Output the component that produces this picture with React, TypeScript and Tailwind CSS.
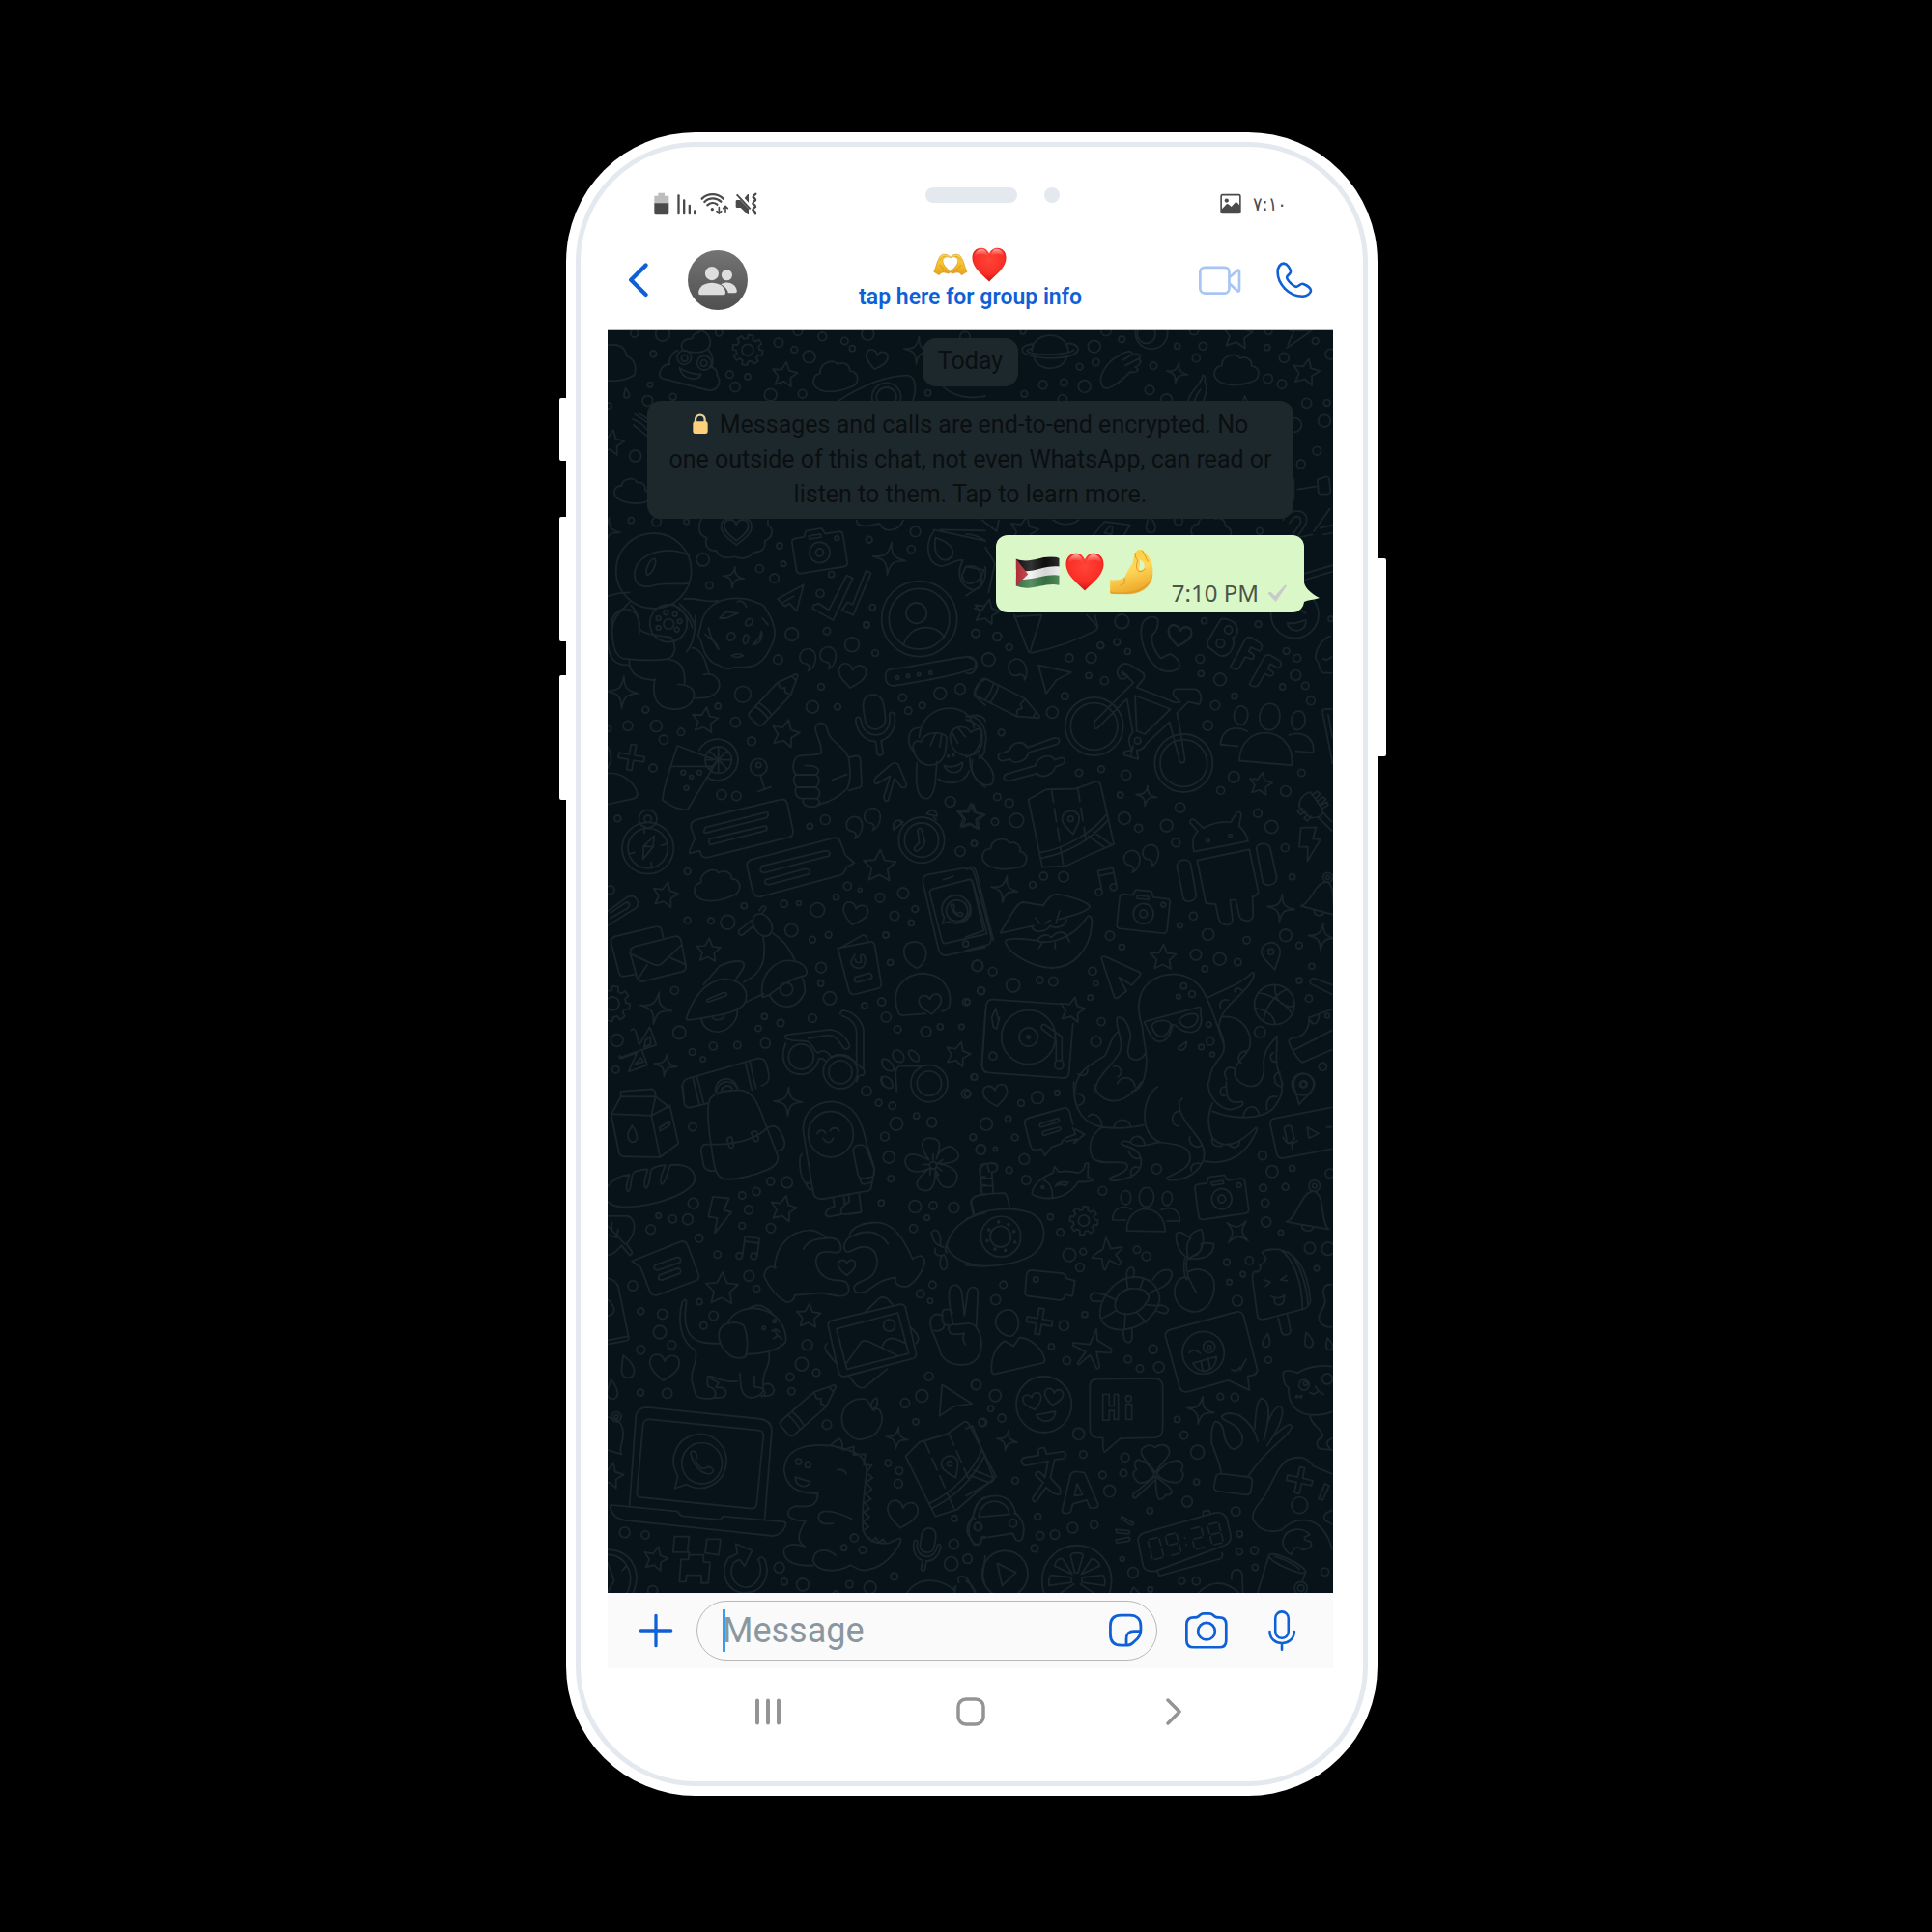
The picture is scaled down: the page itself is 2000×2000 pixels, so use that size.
import React from "react";

/* ---------- wallpaper doodles ---------- */

const ring = (r: number, x = 0, y = 0) =>
  `M${x - r} ${y}a${r} ${r} 0 1 0 ${2 * r} 0a${r} ${r} 0 1 0 ${-2 * r} 0Z`;

const gearPath = (() => {
  const pts: string[] = [];
  for (let i = 0; i < 8; i++) {
    const a = (i * Math.PI) / 4;
    for (const [d, r] of [[-0.24, 38], [-0.17, 50], [0.17, 50], [0.24, 38]]) {
      pts.push(`${(Math.cos(a + d) * r).toFixed(1)} ${(Math.sin(a + d) * r).toFixed(1)}`);
    }
  }
  return `M${pts.join("L")}Z${ring(19)}`;
})();

const SHAPES = {
  star: "M0 -50L15 -18L49 -15L24 9L31 42L0 26L-31 42L-24 9L-49 -15L-15 -18Z",
  sparkle: "M0 -50C4 -13 13 -4 50 0C13 4 4 13 0 50C-4 13 -13 4 -50 0C-13 -4 -4 -13 0 -50Z",
  heart: "M0 45C-20 30 -50 10 -48 -15C-46 -45 -10 -45 0 -18C10 -45 46 -45 48 -15C50 10 20 30 0 45Z",
  cloud: "M-52 30C-80 10 -65 -20 -42 -20C-40 -52 8 -60 16 -38C38 -45 54 -28 50 -12C82 -2 72 34 45 38C10 46 -28 44 -52 30Z",
  quote: "M0 16C-34 18 -34 -32 2 -34C38 -30 32 24 6 38C12 28 10 20 0 16Z",
  camera: `M-68 -45H-40L-32 -63H18L26 -45H68Q80 -45 80 -33V52Q80 65 68 65H-68Q-80 65 -80 52V-33Q-80 -45 -68 -45Z${ring(32, 0, 10)}${ring(12, 0, 10)}${ring(7, 60, -25)}M-25 -46H12V-36H-25Z`,
  gear: gearPath,
  drop: "M-8 -40C10 -20 26 0 20 20C12 42 -18 38 -20 14C-20 -4 -12 -20 -8 -40Z",
  pin: `M0 48C-14 20 -32 4 -32 -16C-32 -58 32 -58 32 -16C32 4 14 20 0 48Z${ring(10, 0, -16)}`,
  people: "M0 -100C42 -100 42 -20 0 -18C-42 -20 -42 -100 0 -100ZM-82 85C-88 -40 82 -40 82 85ZM-90 -85C-60 -85 -62 -28 -88 -26C-120 -30 -116 -85 -90 -85ZM90 -85C60 -85 62 -28 88 -26C120 -30 116 -85 90 -85ZM-90 40H-145C-145 -10 -105 -25 -65 -8M90 40H145C145 -10 105 -25 65 -8",
  plus: "M-8 -40H8V-8H40V8H8V40H-8V8H-40V-8H-8Z",
  bolt: "M-20 -55L30 -50L14 -14L38 -8L-14 56L-6 10L-34 6Z",
  note: `M-12 30V-38H38V22M-12 -22H38${ring(11, -23, 30)}${ring(11, 27, 24)}`,
  mic: "M0 -90C38 -90 34 -50 32 -10C30 30 -30 30 -32 -10C-34 -50 -38 -90 0 -90ZM-62 -15Q-62 -26 -54 -26Q-46 -26 -46 -15C-46 56 46 56 46 -15Q46 -26 54 -26Q62 -26 62 -15C62 30 35 55 9 58V95Q9 104 0 104Q-9 104 -9 95V58C-35 55 -62 30 -62 -15Z",
  pencil: "M-85 -28H40L98 -4Q102 0 98 4L40 28H-85Q-98 28 -98 14V-14Q-98 -28 -85 -28ZM-62 -28Q-56 0 -62 28M-46 -28Q-40 0 -46 28M40 -28L34 -8L44 0L34 10L40 28M84 -9V9",
  bell: `M-58 45C-30 30 -34 -40 0 -48C36 -42 30 30 58 45Z${ring(15, 0, -62)}${ring(6, 0, -62)}M-16 46C-12 64 14 64 16 46`,
  map: `M-118 -90L-60 -112L30 -100L95 -112Q104 -112 106 -100L118 85L40 105L-36 128L-108 120Z${"M-44 -108V-70M-44 -50V-10M-44 10V50M-44 70V120M36 -98V-60M36 -40V0M36 20V60"}M-110 75C-30 75 60 40 112 -10M-108 92C-20 90 50 60 114 8M45 48L90 92M62 38L108 84M0 36C-14 14 -26 4 -26 -12C-26 -44 26 -44 26 -12C26 4 14 14 0 36Z${ring(8, 0, -12)}`,
  plane: "M-50 -42L52 -20L6 4L-26 46Z",
  logo: `M-48 66L-86 78L-76 40A84 84 0 1 1 -48 66Z${ring(64)}M-34 -24C-42 -36 -24 -46 -18 -30C-12 -18 -24 -14 -18 -4C-8 16 4 20 14 14C20 6 42 18 34 28C16 44 -24 18 -34 -24Z`,
} as const;

type Mark = [keyof typeof SHAPES, number, number, number, number?];

interface Tile {
  x: number;
  y: number;
  scaleY?: number;
  dots: number[][];
  marks: Mark[];
  lines: string[];
}

const TILES: Tile[] = [
  {
    x: 620, y: 330,
    dots: [[110, 45, 12], [198, 47, 22], [373, 43, 11], [618, 38, 14], [835, 48, 19], [694, 55, 13], [763, 69, 11], [787, 92, 9], [558, 74, 14], [607, 96, 10], [653, 118, 19], [169, 109, 10], [406, 173, 11], [462, 180, 9], [423, 212, 15], [533, 236, 19], [632, 233, 13], [159, 205, 8], [230, 242, 10], [151, 255, 16], [1022, 230, 9], [1137, 56, 16], [113, 426, 18], [100, 626, 9], [179, 630, 14], [272, 630, 8], [561, 705, 9], [323, 748, 20], [499, 776, 12], [545, 806, 14], [573, 761, 8], [343, 828, 11], [722, 794, 9], [687, 853, 12], [839, 686, 10], [983, 661, 16], [970, 716, 12], [850, 896, 9], [831, 950, 9], [30, 270, 9]],
    marks: [["gear", 462, 97, 0.95, 12], ["star", 577, 174, 0.8, 8], ["cloud", 732, 182, 1, -10], ["heart", 862, 126, 0.7, 12], ["sparkle", 990, 98, 0.85, 6], ["drop", 86, 232, 0.4], ["star", 38, 385, 0.8, 10], ["cloud", 102, 538, 0.8, 5], ["heart", 427, 658, 0.98], ["heart", 427, 654, 0.78], ["camera", 684, 716, 1, -9], ["sparkle", 902, 745, 1.02, 8], ["sparkle", 418, 803, 0.66, 8], ["sparkle", 26, 658, 0.8, 8]],
    lines: [
      "M27 82C60 75 85 90 85 115C112 125 118 150 110 175C85 192 50 195 27 192",
      "M262 98C245 75 270 60 290 62C288 45 310 45 318 36C345 45 352 75 340 92C320 110 285 105 262 98",
      "M245 98C225 105 215 130 220 142C195 140 180 172 195 185L340 222C370 225 382 195 367 175C368 160 358 150 350 152C358 130 352 112 340 96",
      "M250 152C265 165 300 175 318 172C310 195 260 192 250 152Z" + ring(22, 265, 120) + ring(10, 266, 122) + ring(22, 327, 137) + ring(10, 326, 138),
      "M745 254C820 205 900 175 960 176C988 182 985 225 975 255" + ring(45, 893, 244) + ring(31, 893, 244),
      "M105 312Q130 320 150 345M112 296L150 322M125 294L150 310M108 330L150 365",
      "M318 622C305 650 312 675 335 680C325 710 345 722 365 720C372 745 405 745 420 738C445 750 470 742 480 725C505 728 520 710 515 690C540 680 545 655 525 640L525 625",
      "M800 626C802 655 850 640 872 636C890 672 935 655 945 626M1070 212C1110 245 1150 250 1200 240",
      ring(117, 170, 783) + "M280 735C230 705 130 720 112 780C105 830 135 835 165 830C205 815 250 830 282 820M150 795C140 780 160 745 172 745C185 750 165 795 150 795Z",
      "M1040 660C1010 700 1020 760 1060 768C1090 770 1100 745 1130 750C1110 790 1120 830 1160 842C1190 840 1205 810 1200 770M1040 655L1200 690M1060 655L1200 658M1045 680C1080 690 1105 710 1098 735C1080 765 1035 750 1045 680ZM1140 770L1195 780C1190 825 1130 840 1128 795Z",
      "M555 870L636 826L614 908L592 884L578 893ZM573 880L605 862",
      "M666 890L682 884L714 905L770 797L788 806L728 936L664 900ZM755 905L772 880L788 888L830 782L845 790L790 920Z",
      ring(117, 995, 932) + ring(94, 995, 932) + ring(32, 986, 914) + "M946 1014C965 945 1050 945 1072 990",
      "M27 862C60 850 80 850 95 850M95 880C60 915 45 930 42 960M265 870C300 865 340 885 370 875M250 885C280 910 295 940 300 960M230 885C255 905 285 930 290 960M100 890C120 910 130 935 125 980",
      ring(58, 216, 946) + ring(16, 217, 948) + ring(7, 208, 913) + ring(7, 185, 930) + ring(7, 236, 917) + ring(7, 251, 940) + ring(7, 185, 960) + ring(7, 242, 965),
      "M545 962C540 940 535 925 520 905C510 885 500 885 485 880C470 870 455 868 425 868C405 868 390 870 370 880C345 890 335 905 322 930L308 985C320 1000 320 1020 330 1040C345 1065 355 1070 370 1075C390 1090 410 1090 420 1082C450 1085 465 1080 480 1078C500 1070 520 1050 528 1030C545 1000 548 985 545 962Z",
      "M375 930L395 910L432 914L395 930ZM430 880C440 870 455 885 458 895M455 950C455 930 475 925 478 940C478 955 458 955 455 950ZM508 930L525 950",
      "M1166 900L1190 905L1200 890",
    ],
  },
  {
    x: 1000, y: 330,
    dots: [[435, 38, 15], [484, 64, 10], [177, 40, 8], [398, 86, 19], [353, 149, 10], [403, 135, 11], [239, 205, 13], [304, 198, 11], [368, 210, 19], [181, 233, 10], [582, 146, 11], [570, 221, 14], [656, 85, 9], [736, 85, 12], [715, 122, 12], [708, 36, 14], [935, 89, 9], [988, 121, 15], [938, 186, 14], [981, 203, 14], [1085, 69, 10], [1132, 110, 16], [1058, 262, 15], [1121, 261, 10], [1113, 317, 19], [1020, 330, 22], [1090, 410, 13], [1040, 451, 13], [940, 38, 11], [912, 659, 10], [660, 628, 13], [484, 940, 22], [740, 938, 9], [908, 949, 10], [30, 977, 12], [97, 987, 13], [1133, 932, 8], [418, 1015, 10], [300, 250, 14], [623, 252, 18]],
    marks: [["star", 843, 48, 0.95, 8], ["sparkle", 656, 168, 0.66, 10], ["cloud", 838, 162, 1, -5], ["star", 1056, 166, 0.85, 12], ["star", 180, 658, 0.9, 12], ["drop", 574, 640, 0.7], ["cloud", 760, 655, 0.9], ["star", 64, 910, 0.8, 14], ["heart", 663, 982, 0.75, 8]],
    lines: [
      "M205 100C205 40 310 30 318 100M205 78C165 85 160 108 215 118C270 128 340 120 348 98C350 82 330 75 312 77M205 92C180 98 185 105 225 110C290 112 325 108 335 96M212 122C225 165 300 165 312 120",
      ring(50, 576, 44) + ring(28, 560, 48),
      "M420 200C412 175 440 130 475 115C495 100 520 95 515 112C540 105 548 115 535 125C550 130 540 145 525 150C540 155 535 170 510 165C480 195 430 240 420 200ZM485 130L515 112M495 145L535 125",
      "M690 255C700 215 730 210 735 175Q745 175 742 195C755 220 740 245 738 255M710 255C715 235 722 228 728 220M860 255L866 240L872 255",
      "M997 90L1075 36H1005M1020 36L1000 80M1018 500V560M1030 530L1090 520M1092 500L1118 490Q1128 490 1128 500L1132 535Q1130 545 1120 545H1105Q1095 545 1094 535Z",
      "M985 625C990 600 1050 580 1058 620C1062 645 1030 665 1030 680L1075 670M1005 635C1020 605 1045 610 1038 635C1030 655 1005 670 1005 700M1080 660L1130 590M1100 650L1140 640M1110 670L1140 665",
      "M380 690L430 630L510 640L480 690M430 665C450 635 460 640 452 670ZM50 625L95 660L102 625M270 625C300 645 330 640 350 625",
      "M0 770C40 760 55 790 45 830L0 860M0 670C25 665 60 690 60 690M60 710L90 760L70 850",
      "M150 920L192 1030Q195 1040 210 1036C290 1020 360 990 400 970Q410 965 408 950L400 920M150 925L235 920L200 1030M375 920L408 955",
      "M1050 792L1140 765M1050 812L1140 785" + ring(74, 1021, 918) + "M998 945C1020 950 1040 940 1055 935C1062 975 1005 980 998 945ZM975 905L990 890L1000 905M1040 905L1055 915",
    ],
  },
  {
    x: 620, y: 630,
    dots: [[599, 80, 20], [708, 70, 11], [831, 51, 9], [786, 112, 22], [858, 138, 10], [556, 158, 14], [447, 266, 25], [690, 243, 10], [663, 305, 19], [741, 305, 10], [370, 303, 9], [145, 314, 10], [90, 364, 15], [178, 365, 18], [255, 383, 11], [201, 407, 14], [424, 353, 15], [474, 412, 13], [168, 495, 12], [943, 277, 12], [961, 317, 11], [1004, 301, 10], [1060, 264, 19], [1122, 250, 16], [381, 578, 15], [427, 582, 14], [58, 652, 10], [655, 676, 9], [703, 656, 15], [1091, 600, 16], [1165, 729, 9], [1122, 754, 15], [275, 816, 10], [451, 923, 9], [575, 917, 11], [621, 915, 7], [679, 936, 22], [737, 896, 9], [772, 862, 12], [811, 874, 6], [873, 898, 14], [945, 884, 17], [982, 933, 10], [918, 954, 14], [970, 976, 9], [891, 1014, 9], [275, 968, 10], [348, 970, 10], [400, 974, 22], [598, 999, 20], [713, 1013, 10], [663, 1028, 10], [690, 1115, 16], [905, 1099, 9], [689, 1164, 9], [235, 1186, 12], [717, 1210, 20], [825, 1233, 9], [878, 1221, 12], [892, 1269, 15], [928, 1307, 11], [1016, 1314, 16], [1060, 1299, 9], [1126, 1299, 8], [1141, 1222, 11], [1175, 1109, 17], [514, 1267, 9], [564, 1287, 11], [663, 1272, 13], [495, 1304, 9], [517, 1350, 15], [430, 1356, 11], [355, 1359, 12], [250, 1317, 20], [290, 1377, 10], [323, 1400, 8], [56, 1341, 19], [52, 1432, 11], [1170, 77, 12], [35, 874, 13], [1187, 1187, 11], [1165, 1455, 10], [30, 373, 8]],
    marks: [["quote", 647, 157, 0.95, 5], ["quote", 710, 151, 0.95, 5], ["heart", 786, 207, 0.88, 8], ["pencil", 548, 278, 1, -47], ["sparkle", 74, 260, 1, 4], ["star", 329, 347, 0.82, 8], ["star", 579, 388, 0.88, 14], ["mic", 860, 355, 0.98, -8], ["plus", 101, 462, 1, 10], ["quote", 792, 678, 0.95, 5], ["quote", 848, 652, 0.95, 5], ["star", 872, 800, 1.03, 2], ["star", 1152, 646, 0.82, 6], ["cloud", 364, 862, 1.03, -12], ["star", 206, 889, 0.8, 12], ["heart", 795, 947, 0.8, 14], ["star", 340, 1062, 0.76, 4], ["sparkle", 178, 1241, 1, 10], ["gear", 42, 1227, 1.1, 10], ["sparkle", 207, 1418, 0.7, 8], ["star", 1115, 1384, 0.78, 16], ["heart", 1030, 1227, 0.72, -8], ["logo", 1112, 938, 0.52]],
    lines: [
      "M42 30C60 -10 120 -10 126 50C110 80 200 85 225 90C245 120 235 160 200 158C170 162 110 160 75 155C45 145 38 90 42 30ZM27 100C30 160 55 178 92 175",
      "M94 158C92 200 120 220 170 222M218 158C260 165 268 190 266 236M174 218C165 260 170 310 230 312C290 315 305 270 290 250C280 238 260 236 246 235M290 122C325 125 335 180 342 205M325 205C370 195 390 240 360 265C340 280 320 278 298 278M300 20C300 90 285 120 272 134",
      "M398 90C400 70 425 70 422 88C418 102 400 104 398 90ZM448 98C450 75 466 80 465 92C460 115 448 115 448 98ZM412 146C425 140 440 140 448 146C440 153 420 153 412 146ZM505 70C510 95 498 110 478 112L500 88ZM330 80L365 110L372 126M340 60L348 88L370 125",
      "M890 210C890 195 895 190 910 188C990 178 1060 160 1140 150C1170 145 1180 180 1160 188C1080 215 990 228 915 240C895 240 890 225 890 210Z" + ring(5, 927, 214) + ring(5, 960, 209) + ring(5, 994, 204) + ring(5, 1030, 199),
      "M244 426L368 472L275 625Q235 625 198 595Q198 560 244 426ZM225 490H355M311 440A64 64 0 1 1 334 524" + ring(41, 371, 470) + "M371 430V510M331 470H411M343 441L399 499M399 441L343 499" + ring(7, 262, 509) + ring(7, 312, 509) + ring(6, 287, 523) + ring(7, 272, 557),
      ring(26, 496, 492) + ring(8, 496, 486) + "M502 520L515 562M494 568L535 554",
      "M672 372C675 350 705 350 710 378C715 415 770 430 777 470C782 510 780 545 770 560C750 580 720 600 690 606C660 625 630 615 634 590C612 590 605 570 614 553C600 540 605 520 612 515C600 505 600 475 615 460C640 450 660 460 690 450C695 420 675 400 672 372ZM640 488C690 485 688 510 672 516H615M614 555H670C690 545 685 520 672 516M634 590H678C690 580 688 560 670 555M678 590C690 600 685 605 680 608M725 532L770 515M777 462L800 457Q810 457 812 470L816 545Q816 555 805 557L775 565",
      "M860 525Q850 538 862 545L905 520L885 585Q885 600 898 597L918 528L940 555Q955 560 955 545L930 485Q920 475 908 484Z",
      "M995 400C1000 290 1150 280 1165 370M978 445C955 420 955 370 995 370M1150 335C1180 325 1200 340 1200 350M1080 400C1070 380 1010 380 1000 415C985 405 970 420 978 440C990 500 1060 500 1075 450C1080 425 1080 410 1080 400ZM1090 395C1100 360 1140 360 1155 385C1180 365 1195 375 1190 400C1195 470 1120 470 1098 430Q1090 410 1090 395M1030 425L1045 388M1058 430L1065 390M1115 418L1095 382M1138 398L1115 370M988 480C980 580 1000 590 1020 590C1050 580 1045 510 1050 475M1055 530C1080 545 1130 550 1150 505M1072 488C1090 495 1115 490 1130 478C1130 520 1080 515 1072 488ZM1160 470C1150 520 1180 540 1200 555" + ring(3, 1085, 458) + ring(3, 1101, 455),
      "M27 512C70 505 115 545 120 575Q120 585 110 590L27 608",
      ring(80, 152, 744) + ring(62, 152, 744) + ring(28, 152, 653) + ring(11, 152, 653) + "M137 778L139 738L172 706L168 740ZM139 738L168 740M141 682V697M163 804V788M94 762L110 757M210 730L194 736",
      "M286 680Q284 660 305 655L565 593Q580 590 585 605L602 685Q606 705 592 710L340 772Q322 776 318 765L314 752L282 760Q278 755 298 715ZM328 688Q322 696 330 697L520 650Q530 640 522 632L330 680ZM344 715Q338 724 346 733L518 690Q526 682 518 675L344 715Z",
      "M460 800Q458 785 475 779L730 712Q745 710 750 725L765 765L793 790L768 805Q765 820 750 828L500 895Q485 897 478 880ZM505 800L705 752Q720 752 716 768L515 820Q495 820 505 800ZM518 842L640 808Q660 808 652 825L530 857Q510 857 518 842Z",
      ring(71, 1002, 719) + ring(53, 1002, 719) + "M990 688Q995 678 1002 685L1010 715Q1015 730 1005 740L990 752Q975 755 982 740L995 728ZM915 688C910 660 930 650 945 664ZM1018 638C1030 620 1050 625 1050 645ZM935 660L945 672M1040 648L1048 656",
      "M1006 850Q1004 830 1022 826L1150 803Q1168 800 1172 818L1225 1030M1006 850L1055 1060Q1062 1078 1080 1077L1200 1052M1028 885Q1025 875 1040 870L1148 842Q1158 840 1162 852L1205 1010L1075 1040Q1068 1040 1065 1030ZM1070 842L1100 832" + ring(9, 1139, 1041),
      "M27 940L90 895C115 885 130 915 115 930L27 985M35 945L85 912C100 912 95 925 90 930L35 962",
      "M38 1040Q35 1025 50 1018L175 988Q192 985 195 1000L200 1022M38 1040L62 1130Q66 1145 80 1142L112 1136M97 1070Q97 1055 110 1050L235 1018Q250 1016 255 1030L270 1110Q272 1125 258 1128L138 1158Q122 1160 118 1145ZM98 1072L170 1105Q190 1112 200 1098L256 1045M150 1106L122 1150M222 1084L268 1105",
      "M505 948C530 955 545 990 535 1005C525 1025 500 1020 485 995C472 975 475 945 505 948ZM498 938L508 925Q520 922 518 932L505 948M474 968L435 1000Q430 1015 445 1014L482 985M510 1020C520 1080 515 1130 450 1160M540 1008C575 1030 595 1060 608 1092M325 1168L375 1110Q420 1090 445 1097Q455 1105 448 1118L425 1152M272 1270C300 1190 340 1155 390 1150C450 1155 465 1190 455 1220C445 1250 400 1260 280 1278Q270 1278 272 1270ZM335 1215L388 1192Q400 1192 396 1202L345 1220Q332 1224 335 1215ZM452 1225L512 1196M508 1207C495 1140 550 1085 600 1094C640 1098 655 1130 640 1140C590 1150 555 1180 530 1200Z",
      "M318 1275C330 1330 410 1330 430 1260V1240M352 1268C355 1282 388 1280 390 1262M530 1200C550 1250 620 1250 640 1190Q640 1165 632 1148" + ring(20, 582, 1182),
      "M742 1058L818 1015Q830 1012 832 1025L835 1035M742 1055L845 1035Q855 1035 857 1048L877 1165Q877 1178 865 1180L795 1198Q780 1200 776 1185ZM795 1075L783 1095C780 1120 830 1130 827 1090C827 1075 815 1072 812 1078L815 1098Q800 1105 795 1090M795 1145L840 1132Q850 1135 848 1148L805 1160Q790 1162 795 1145Z",
      "M950 1050C965 1025 1020 1030 1016 1075C1015 1095 1000 1112 988 1117C960 1105 940 1080 950 1050ZM930 1255C895 1160 980 1125 1020 1135C1070 1140 1100 1190 1088 1235Q1080 1250 1065 1250M930 1255Q935 1265 950 1263L1015 1258",
      "M580 1330Q575 1325 590 1323L720 1308C760 1315 780 1350 778 1362Q770 1372 760 1365C745 1345 740 1325 710 1325L650 1335M580 1335C600 1345 620 1340 650 1345C670 1365 675 1380 680 1380C700 1365 715 1380 722 1395C745 1380 775 1385 820 1430Q830 1440 820 1450C808 1445 805 1455 800 1470M750 1260Q750 1248 760 1248C800 1255 820 1290 822 1310V1430M755 1265C790 1275 800 1300 800 1315V1410M580 1350C560 1400 580 1445 625 1447C670 1445 680 1410 683 1398Q695 1395 705 1405" + ring(39, 628, 1392) + ring(53, 750, 1438) + ring(36, 750, 1440),
      "M100 1310Q110 1300 115 1315L125 1355L158 1300L178 1355L65 1395M65 1388Q60 1400 75 1395L118 1380L92 1438L150 1418L135 1375M145 1340L160 1330V1355L140 1362ZM130 1395L112 1415L138 1408Z",
      "M260 1485Q258 1468 275 1460L490 1398Q515 1392 522 1420L528 1450Q530 1475 505 1482M260 1485L265 1520M292 1458L312 1540M305 1455L325 1535M455 1410L475 1495M468 1405L488 1490M362 1500A34 34 0 0 1 430 1490M380 1500A18 18 0 0 1 414 1492",
      "M883 1455C870 1450 875 1480 890 1485M915 1375C905 1395 925 1412 942 1408C960 1390 930 1360 915 1375ZM962 1375C960 1395 980 1410 992 1406C1000 1385 975 1365 962 1375ZM880 1400C875 1425 895 1440 915 1435C920 1415 895 1395 880 1400ZM882 1455C870 1480 900 1495 912 1487C915 1460 890 1450 882 1455ZM1000 1422L935 1420Q920 1425 922 1450L925 1500" + ring(57, 1026, 1475) + ring(38, 1026, 1475),
      "M27 430Q40 450 37 475L27 495M1166 270C1165 240 1185 225 1200 220M1166 270L1200 300",
      "M1200 1250L1190 1400Q1186 1430 1200 1440",
    ],
  },
  {
    x: 1000, y: 630,
    dots: [[97, 87, 13], [30, 77, 12], [134, 120, 10], [70, 158, 20], [321, 153, 12], [389, 153, 16], [418, 114, 10], [469, 104, 10], [502, 133, 9], [381, 208, 9], [430, 224, 12], [307, 272, 11], [268, 322, 18], [110, 385, 10], [727, 156, 13], [730, 202, 9], [789, 220, 19], [774, 300, 14], [834, 272, 9], [751, 363, 15], [995, 132, 10], [1028, 154, 12], [1024, 207, 16], [983, 243, 9], [1054, 240, 11], [1071, 286, 13], [351, 510, 11], [420, 499, 10], [497, 517, 15], [479, 579, 9], [97, 585, 11], [134, 604, 13], [90, 662, 11], [157, 658, 22], [832, 523, 17], [791, 565, 12], [993, 567, 16], [1042, 510, 11], [665, 618, 15], [492, 651, 19], [536, 682, 12], [623, 674, 19], [906, 635, 13], [949, 678, 20], [652, 727, 13], [991, 743, 12], [26, 730, 9], [241, 831, 12], [207, 858, 10], [303, 833, 16], [1013, 833, 9], [706, 955, 12], [664, 984, 8], [447, 1016, 14], [484, 1051, 9], [752, 1012, 18], [714, 1075, 17], [788, 1088, 19], [844, 1098, 11], [742, 1119, 9], [872, 1030, 11], [993, 1015, 19], [1035, 1046, 10], [1074, 1111, 9], [36, 1110, 17], [83, 1127, 13], [146, 1170, 21], [229, 1154, 11], [271, 1158, 14], [47, 1187, 12], [393, 1126, 12], [403, 1164, 8], [386, 1208, 8], [420, 1283, 12], [404, 1345, 16], [676, 1172, 9], [660, 1205, 7], [702, 1197, 10], [754, 1292, 8], [758, 1344, 12], [731, 1362, 8], [765, 1385, 7], [913, 1315, 17], [1065, 1211, 11], [1035, 1155, 9], [1108, 1423, 12], [26, 1455, 9], [84, 1390, 12], [5, 1222, 8]],
    marks: [["heart", 663, 84, 0.75, 10], ["quote", 160, 190, 1, -25], ["plane", 275, 218, 1, 0], ["pencil", 132, 288, 1.08, 27], ["people", 938, 395, 1, 5], ["star", 915, 545, 0.72, 10], ["sparkle", 560, 582, 0.64, 8], ["map", 327, 665, 1.02, -9], ["star", 18, 648, 0.82, 6], ["cloud", 118, 766, 1, 0], ["quote", 514, 783, 0.95, 5], ["quote", 572, 765, 0.95, 5], ["note", 428, 848, 0.95, -12], ["sparkle", 120, 872, 0.84, 10], ["camera", 552, 938, 0.98, 6], ["sparkle", 978, 930, 0.86, 6], ["star", 612, 1084, 0.82, 2], ["pin", 950, 1080, 0.9, -12], ["bolt", 1066, 730, 0.95, -8], ["star", 330, 1246, 0.8, 12], ["sparkle", 1105, 1020, 0.84, 6], ["bell", 1108, 895, 1, 15]],
    lines: [
      "M545 60C550 25 580 20 595 32C600 50 590 75 580 80C570 105 590 140 605 155C620 150 630 135 642 145C660 155 668 175 660 185C640 200 610 198 590 180C560 155 540 100 545 60Z",
      "M790 35Q800 28 815 35C850 45 850 80 828 92C840 120 815 155 785 145L760 125Q745 115 752 100Z" + ring(12, 815, 66) + ring(13, 790, 108),
      "M868 95Q875 85 890 92L915 108Q925 120 912 132L885 120L878 133L895 145Q895 160 880 155L868 150L848 185Q835 195 822 180ZM928 148Q938 140 950 148L975 162Q985 175 970 185L945 172L938 187L955 198Q955 212 940 208L928 202L908 238Q895 248 880 235Z",
      ring(90, 398, 366) + ring(73, 398, 366) + ring(90, 676, 480) + ring(73, 676, 480),
      "M400 350L520 230L485 195Q480 210 500 205Q500 222 480 218C460 200 475 165 505 172L550 200Q558 210 550 220L530 245L650 292L665 290L645 270Q640 252 655 250H710C730 252 735 280 725 297L690 290L655 325L662 355L680 470Q678 482 665 478L632 352L560 420Q550 440 530 440L535 468L492 455Q485 445 500 442L515 440C505 420 500 400 518 385L500 280L410 370Q398 378 398 362ZM525 270L635 312L555 390L530 380Z" + ring(10, 533, 410) + "M520 425L512 455",
      "M100 460Q100 448 115 448L135 440C145 410 180 410 190 432L275 402Q290 400 290 412Q288 420 280 423L195 447C185 480 145 485 138 468L115 473Q100 473 100 460ZM118 525Q118 515 130 513L215 488C225 455 265 450 275 470L295 463Q308 463 307 475Q305 482 295 486L278 492C265 525 230 525 222 512L135 535Q118 535 118 525Z",
      "M708 755C700 720 710 700 720 692L696 665Q695 652 708 655L738 682Q780 658 822 664L840 635Q850 625 855 640L848 675Q870 695 876 722ZM718 782L880 748L908 880Q905 892 890 895L892 955Q885 975 865 968Q850 965 848 950L838 905L820 905L828 965Q825 985 805 982Q790 978 785 965L775 918L745 915ZM655 800C660 775 695 775 698 795L715 890C712 912 682 915 675 900ZM902 745C905 725 940 725 945 745L965 835C965 860 930 865 922 850Z" + ring(5, 751, 720) + ring(5, 821, 706),
      "M108 1005C130 970 155 915 175 912C200 915 225 920 240 922C250 905 265 885 285 887C320 895 370 905 385 925C375 945 320 955 290 965M108 1008L210 985M205 990C215 1010 250 1005 262 985C275 995 310 990 312 965M290 940L280 975M215 960L230 978M245 978L262 968M122 1035C120 1025 160 1022 215 1030C250 1045 330 1030 375 960C385 945 395 965 390 985C385 1060 330 1120 260 1116C200 1110 130 1070 122 1035ZM222 1030C235 1010 255 1010 265 1022C280 1000 310 1000 315 1020M235 1040L226 1055M277 1038V1056M312 1018L322 1035",
      "M420 1085Q425 1078 435 1082L540 1130Q545 1135 538 1142L515 1170L475 1145L498 1188L470 1210Q462 1212 460 1205Z",
      "M62 1240Q62 1212 85 1214L292 1228M332 1290L320 1440Q318 1460 300 1458L75 1442Q48 1440 50 1415L62 1240" + ring(84, 194, 1331) + ring(29, 194, 1331) + ring(5, 194, 1331) + ring(14, 289, 1417) + "M280 1405V1340L235 1305Q232 1290 245 1292L298 1330V1405M92 1242L100 1275L104 1270L95 1305L85 1300L80 1270Z",
      "M548 1300C500 1150 620 1130 660 1137C740 1150 750 1210 800 1350C810 1400 760 1400 755 1470M548 1300C550 1350 570 1390 555 1450C550 1480 530 1500 515 1500M470 1270C490 1265 505 1290 512 1330C500 1370 495 1400 530 1402Q550 1398 557 1380M470 1270C460 1300 490 1330 480 1370C470 1410 400 1450 402 1500M470 1316C450 1330 445 1370 430 1390C380 1420 340 1440 338 1500",
      "M555 1290Q550 1282 565 1280L725 1237Q735 1240 728 1255C740 1300 715 1320 690 1315C660 1315 655 1290 642 1292C635 1330 620 1345 600 1345C570 1340 565 1300 555 1290ZM577 1295C590 1275 625 1275 636 1290C635 1330 590 1350 577 1295ZM662 1278C680 1255 715 1255 720 1265C720 1310 670 1310 662 1278ZM658 1365L685 1345C685 1372 665 1378 658 1365Z",
      "M748 1210C790 1185 850 1170 890 1130Q900 1130 890 1150C870 1200 790 1230 785 1300C795 1330 805 1340 800 1375M795 1268C850 1260 890 1310 882 1360C865 1400 830 1410 835 1450C850 1490 930 1510 925 1420C920 1370 950 1350 965 1328C970 1370 955 1400 975 1450Q985 1480 980 1500M790 1240C785 1220 800 1212 815 1216M835 1190C835 1175 850 1178 858 1186M870 1375C845 1375 840 1405 855 1412M835 1430C810 1415 795 1440 810 1462M955 1380C940 1385 945 1408 960 1408M975 1440C950 1445 955 1480 978 1485M378 1432C378 1450 360 1455 348 1445M458 1422C480 1415 490 1445 472 1455M470 1475C480 1450 520 1450 525 1485",
      ring(62, 958, 1230) + "M905 1195C940 1190 1010 1240 1012 1262M925 1275C930 1230 980 1180 1000 1185M960 1170C955 1220 990 1240 1018 1235M895 1240C930 1245 955 1260 960 1290",
      "M1132 85C1100 95 1080 140 1088 160C1100 165 1092 190 1110 200L1136 200M1110 155Q1120 165 1135 150M1108 320Q1105 310 1120 312L1136 312M1108 325L1138 480M1125 330L1138 400M1070 570C1035 580 1030 610 1040 625L1070 650C1100 650 1115 640 1105 620ZM1075 580L1090 568L1100 575L1085 592M1090 600L1108 585L1118 592L1100 608M1100 612L1120 600L1125 610L1108 620M1045 620L1030 630L1040 640L1055 630M1060 640L1050 652L1060 660L1072 645M1095 650L1136 690M1110 635L1136 662M1070 1165Q1065 1150 1080 1148L1136 1168M1070 1165L1136 1198M1003 1345Q1000 1335 1030 1332C1060 1320 1068 1290 1065 1270L1136 1245M1003 1345C1010 1370 1030 1400 1045 1410L1136 1370M1020 1370Q1080 1340 1136 1310M1066 1275C1085 1310 1100 1270 1095 1260" + ring(7, 1122, 1265) + ring(34, 1046, 1478) + ring(10, 1046, 1478),
      "M0 200C30 210 40 170 28 160L0 148M0 335C55 330 70 390 58 430C60 450 50 460 40 465M0 345C30 350 40 370 48 375C50 410 40 450 0 462M12 465C10 520 50 560 80 545C100 510 60 470 40 455M0 810C20 800 25 820 28 830L78 1020Q80 1040 65 1045L0 1062M0 845Q15 835 20 850L55 1000L0 1020M0 905Q20 920 14 950L0 970",
    ],
  },
  {
    x: 620, y: 1120, scaleY: 0.3386,
    dots: [[291, 138, 12], [831, 28, 15], [869, 64, 10], [911, 73, 11], [986, 104, 9], [1034, 123, 15], [1140, 36, 14], [924, 128, 20], [888, 167, 13], [901, 230, 18], [907, 296, 10], [533, 304, 12], [584, 307, 17], [489, 335, 12], [445, 347, 11], [465, 391, 13], [445, 440, 10], [534, 447, 14], [293, 371, 16], [185, 409, 8], [229, 419, 12], [276, 420, 16], [161, 451, 14], [311, 478, 12], [368, 528, 11], [877, 370, 9], [982, 381, 19], [1038, 378, 12], [1102, 384, 16], [1019, 415, 8], [977, 448, 12], [1162, 169, 10], [1186, 207, 15], [466, 593, 16], [490, 632, 10], [105, 623, 15], [130, 701, 10], [197, 710, 15], [312, 672, 9], [356, 715, 14], [325, 745, 11], [189, 765, 20], [226, 804, 13], [130, 819, 13], [129, 950, 10], [212, 952, 15], [647, 804, 16], [630, 863, 20], [594, 902, 12], [675, 889, 11], [598, 946, 11], [708, 1048, 14], [998, 648, 12], [1036, 620, 11], [1029, 669, 8], [1025, 900, 13], [1003, 960, 19], [951, 982, 14], [1172, 926, 15], [984, 1039, 9], [898, 1165, 10], [933, 1189, 11], [930, 1228, 13], [1104, 1335, 9], [1102, 1413, 15], [1094, 1473, 21], [1145, 1458, 14], [917, 1512, 11], [793, 1394, 12], [761, 1424, 9], [819, 1431, 11], [80, 1377, 16], [144, 1385, 12], [560, 1485, 16], [576, 1528, 10], [633, 1537, 19], [778, 1536, 11], [842, 1546, 19], [167, 1555, 15], [1190, 1042, 11], [620, 1161, 9], [649, 1170, 9]],
    marks: [["sparkle", 588, 60, 0.88, 2], ["bolt", 374, 406, 1, 0], ["star", 573, 388, 0.82, 12], ["note", 460, 508, 0.9, 8], ["star", 382, 633, 1.02, 2], ["heart", 770, 566, 0.56], ["star", 651, 716, 0.76, 4], ["heart", 203, 871, 0.95, 4], ["drop", 88, 872, 0.95, -8], ["drop", 42, 942, 0.8, 4], ["pencil", 655, 998, 1.05, -41], ["sparkle", 926, 1089, 0.68, 8], ["logo", 320, 1166, 0.98], ["heart", 942, 1320, 0.98, 8], ["star", 176, 1458, 0.76, 14], ["mic", 1018, 1425, 0.68, 10], ["plane", 1100, 985, 1.05, 20], ["map", 1094, 1178, 0.98, -24], ["star", 36, 1204, 0.8, 12]],
    lines: [
      "M68 45V30Q70 28 165 22Q178 28 176 45ZM68 45L38 100L62 215Q65 228 80 228L190 230L245 190Q248 188 245 180L222 80L176 45L163 103L190 230M38 98L163 103L222 72M188 140L220 120V132L190 150ZM90 165C88 150 100 145 103 133C112 148 122 160 118 175C110 190 92 185 90 165Z",
      "M27 320C45 295 70 285 95 283C85 310 82 335 92 335C105 320 95 290 110 275Q135 265 152 268C140 300 138 320 147 325C162 310 155 280 165 265Q190 253 207 255C190 290 188 305 195 313C212 305 212 270 222 254Q240 252 262 256C300 265 305 300 290 315C250 360 130 385 70 382Q40 380 27 365",
      "M27 410H90C115 420 120 460 85 495L100 515Q108 525 95 530L70 500Q45 530 27 530M27 440L80 495M40 430V455M60 450L55 475L30 470",
      "M342 60C350 30 400 25 440 25C480 30 490 60 510 110L555 225C560 245 545 260 520 270C470 290 430 300 390 297C355 290 355 230 348 190C340 140 335 90 342 60ZM350 190C420 195 500 170 522 140L540 135C560 135 570 160 577 185C578 205 565 212 556 210M348 190L325 192Q315 200 318 215L325 255Q330 275 360 272M398 175Q405 165 413 170L418 195Q415 205 405 200ZM473 155Q480 148 490 152L496 175Q492 185 482 180ZM258 10L265 65Q268 80 285 78L340 65M365 30A34 34 0 0 1 430 20M385 22A16 16 0 0 1 413 18",
      "M636 160C625 90 680 60 725 60C790 65 815 110 832 190L855 260C855 290 850 295 845 325Q840 335 825 335L695 358Q668 360 665 335ZM630 220C618 235 625 290 640 308L655 310M642 310L650 325Q655 332 665 328M790 215C785 190 825 185 832 205L855 265Q858 285 850 290C830 295 810 300 805 285ZM812 295Q810 315 830 312L850 305M728 358L732 380L710 390Q695 408 715 412L752 405M760 348L765 375Q750 385 752 402Q760 408 815 398L808 340M775 345L778 365Q770 375 762 372" + ring(70, 720, 160) + "M678 158C682 145 700 145 704 157M718 150C722 138 742 138 746 149M697 172C705 190 722 188 728 172",
      "M1025 238C990 190 1005 170 1030 172C1060 172 1065 190 1048 235C1060 200 1090 190 1105 205C1130 230 1115 250 1055 250C1115 260 1125 290 1100 318C1075 330 1055 320 1045 272C1045 320 1030 335 1010 332C980 325 975 305 1025 265C980 285 950 270 951 240C955 215 980 215 1025 238Z" + ring(11, 1038, 255) + "M1038 240V220M1050 250L1068 238M1052 262L1065 272M1030 265L1028 285M1026 252H1005M1045 268L1055 285",
      "M102 548L255 488Q268 485 275 498L310 590Q312 605 300 608L180 652Q165 655 158 640L130 568ZM175 560L245 536Q258 538 252 552L185 575Q165 575 175 560ZM188 590L245 570Q258 572 252 585L198 605Q178 608 188 590Z",
      "M545 570C550 500 590 455 660 453C690 460 700 470 708 477C740 475 755 490 751 515Q745 525 725 521C690 515 675 525 674 550C680 590 705 605 740 607C770 605 778 620 775 640Q770 655 745 655L690 645L608 652C605 670 595 675 580 672C555 660 530 630 513 595C515 570 530 560 550 568M635 512C650 480 680 480 710 478M778 470C785 440 830 428 870 430C910 435 940 465 975 542C1000 525 1010 530 1012 555C1000 590 985 610 960 625C930 630 915 615 922 598C890 600 865 615 845 630C820 650 795 650 792 630C795 610 830 610 850 590C875 555 865 510 830 505C800 500 790 520 770 520C755 510 760 480 790 470C830 450 870 455 898 495",
      "M1080 500C1095 440 1150 410 1200 400M1080 500C1090 540 1150 562 1200 563M1082 490C1070 510 1080 530 1082 520M1070 505C1045 500 1035 480 1033 460C1045 445 1065 455 1060 500M1045 510C1040 525 1050 535 1072 530M1065 530C1055 555 1060 570 1070 574C1090 570 1080 540 1072 528M1200 345Q1160 345 1156 365L1165 402M1200 250Q1182 260 1185 280L1190 345M1185 290H1200M1188 315H1200",
      "M378 800C330 800 280 800 270 740C265 710 270 690 272 670Q268 660 258 675C245 730 250 790 300 822C310 860 280 880 290 920L300 955Q305 970 350 968C370 965 365 935 340 932Q335 925 338 900M378 800C370 780 370 760 385 745C400 735 430 730 450 745C465 780 462 820 455 840C440 848 415 845 400 830C385 815 380 810 378 800ZM400 738C415 700 470 680 520 700C560 715 585 760 580 795C560 820 510 832 460 832M470 690Q495 675 520 692Q535 700 540 712M528 825C535 870 510 880 510 915V935C515 940 505 965 470 965C440 960 440 930 438 890M340 900C360 895 370 920 430 915M345 905L372 920Q360 935 365 935C395 930 400 950 390 962Q375 968 360 965M483 900V930C480 935 510 930 513 945Q520 955 505 962M515 925C535 915 550 940 540 953Q530 962 505 960M545 760L555 775L542 785M555 775L568 785M538 762Q550 750 560 765" + ring(5, 512, 752) + ring(5, 545, 731),
      "M712 745Q710 733 722 730L935 680Q948 678 952 690L985 828Q988 842 975 846L765 900Q750 902 745 890ZM738 755L928 706L962 830L770 878ZM768 860L815 795Q825 788 840 795L925 835M880 808Q890 780 920 785L950 798M825 705L870 662Q880 655 895 662L912 680M778 902L800 928Q815 940 828 932L895 878M708 800C695 810 705 825 735 858M968 750C990 770 1000 785 985 800" + ring(18, 902, 744),
      "M1100 740C1090 690 1080 640 1095 625C1110 615 1125 625 1128 650L1135 715L1145 645C1150 620 1178 625 1177 645L1172 750C1200 790 1190 850 1150 862C1110 870 1070 860 1058 820C1050 790 1035 770 1030 745C1025 710 1050 705 1068 715C1060 690 1090 690 1098 708M1068 715C1060 735 1080 750 1085 742M1042 760C1055 765 1072 755 1072 745M1090 765C1080 750 1090 740 1105 742L1150 738Q1170 742 1172 752M1090 768Q1100 775 1135 768Q1125 785 1138 803",
      "M27 600Q50 605 60 625L92 780Q95 790 82 792L27 802M27 665C45 680 60 705 30 715M27 790L90 778",
      "M115 1020Q120 995 150 995L500 1030Q535 1035 537 1065L515 1335M115 1020L95 1295M137 1050Q137 1030 160 1032L495 1065Q512 1067 511 1082L490 1290Q488 1305 470 1304L130 1270Q117 1268 118 1255ZM35 1300Q33 1292 45 1294L245 1313Q250 1325 260 1327L370 1338Q378 1340 385 1328L575 1345Q582 1348 580 1355Q570 1385 540 1388L80 1340Q42 1335 35 1300Z",
      "M855 1005C830 990 855 960 795 972C745 990 745 1050 775 1075C790 1095 810 1095 825 1090C870 1085 890 1035 873 1005C865 995 855 1000 850 1003M850 1000C840 990 850 970 862 966C870 980 860 1000 850 1000Z",
      "M680 1258C620 1260 580 1240 575 1185C580 1120 640 1105 720 1112C790 1125 830 1140 832 1190C825 1250 815 1300 820 1370C830 1400 860 1415 900 1410Q920 1400 935 1395C950 1400 900 1480 840 1490C810 1500 795 1480 780 1478C740 1500 680 1500 665 1465C665 1425 710 1425 735 1447M680 1258C680 1300 650 1300 610 1297C585 1305 580 1325 600 1335C620 1345 635 1340 642 1342C610 1390 620 1410 640 1420C570 1400 560 1440 590 1465C620 1480 645 1480 665 1478M785 1336C740 1315 700 1305 685 1320C675 1345 695 1355 728 1350M610 1208L656 1222C650 1245 610 1240 610 1208ZM740 1186C755 1182 765 1190 768 1198M718 1112L745 1090Q760 1100 755 1125L792 1115L790 1140L828 1138L822 1170L848 1172L830 1195L850 1210L830 1225L848 1245L828 1260L845 1275L825 1287L840 1305L822 1315L840 1330L820 1345L838 1360L820 1372M838 1392L848 1405L860 1393L870 1408L882 1398L890 1408",
      "M230 1438L235 1390H280L275 1438ZM330 1440L335 1398H378L372 1446ZM280 1438L278 1460H255L250 1528H270L272 1508H318V1532H340L345 1468H325V1446H280Z",
      "M403 1455C370 1500 400 1565 455 1562C510 1560 535 1510 515 1460Q505 1445 495 1460C515 1500 490 1545 455 1545C415 1540 400 1500 420 1468L437 1460L452 1480L475 1435Q475 1430 465 1428L425 1412L430 1442Z",
      "M27 1430C80 1430 115 1465 117 1515Q115 1545 105 1565M27 1445C70 1445 95 1480 98 1515Q98 1545 85 1565M27 1470L47 1525L27 1560M72 1495L85 1480" + ring(15, 54, 1024) + ring(6, 54, 1024) + "M27 1025Q75 1030 75 1075C75 1110 60 1120 70 1138L27 1125",
      "M955 1565C990 1510 1060 1515 1105 1555M1100 1550Q1115 1530 1105 1560M1118 1530C1110 1510 1130 1505 1145 1520L1170 1565M1200 1270C1170 1275 1165 1330 1155 1345Q1145 1365 1152 1390L1165 1410Q1180 1420 1185 1410L1190 1390H1200" + ring(12, 1178, 1360) + "M725 1565L735 1555L745 1565M1200 1450L1192 1510L1200 1540",
    ],
  },
  {
    x: 1000, y: 1120, scaleY: 0.3386,
    dots: [[5, 36, 10], [222, 48, 19], [283, 34, 8], [171, 65, 10], [63, 129, 19], [131, 113, 9], [22, 169, 10], [152, 170, 10], [46, 207, 15], [91, 205, 6], [181, 236, 16], [134, 270, 10], [187, 300, 14], [424, 333, 13], [592, 266, 15], [921, 225, 13], [951, 274, 18], [1013, 264, 9], [923, 324, 11], [992, 321, 10], [929, 370, 12], [932, 428, 15], [978, 461, 8], [1068, 508, 17], [1125, 510, 20], [1089, 570, 8], [262, 413, 9], [293, 460, 11], [321, 529, 20], [364, 519, 10], [354, 567, 13], [531, 513, 11], [560, 533, 13], [810, 551, 10], [880, 546, 12], [860, 588, 8], [818, 612, 8], [843, 669, 16], [116, 620, 11], [92, 666, 15], [304, 745, 15], [369, 711, 9], [265, 809, 9], [313, 852, 12], [581, 817, 13], [503, 848, 11], [540, 876, 11], [599, 872, 16], [939, 850, 10], [790, 962, 10], [835, 964, 12], [656, 1032, 9], [677, 1080, 12], [31, 926, 15], [91, 959, 18], [77, 999, 9], [53, 1041, 12], [111, 1028, 12], [350, 1076, 18], [364, 1139, 11], [494, 1148, 13], [489, 1196, 11], [424, 1202, 11], [446, 1251, 18], [719, 1132, 21], [716, 1223, 9], [687, 1283, 16], [838, 1313, 14], [850, 1382, 9], [849, 1436, 10], [896, 1433, 12], [898, 1484, 9], [153, 1219, 10], [223, 1329, 10], [230, 1387, 12], [276, 1384, 14], [331, 1363, 16], [398, 1354, 12], [213, 1426, 11], [571, 1311, 9], [485, 1459, 7], [519, 1500, 16], [670, 1526, 10], [715, 1526, 12], [1115, 1498, 12], [1036, 1294, 25], [572, 1552, 8], [5, 1458, 14], [1130, 280, 14]],
    marks: [["heart", 92, 40, 0.78, -8], ["gear", 366, 424, 0.88, 8], ["people", 560, 395, 0.72, 1], ["camera", 793, 348, 0.98, -8], ["bell", 1070, 388, 1.15, 10], ["sparkle", 843, 458, 0.86, 40], ["plus", 228, 732, 1, 10], ["sparkle", 728, 1004, 0.86, 10], ["sparkle", 127, 1096, 0.64, 10], ["heart", 207, 976, 0.6, -14], ["heart", 272, 962, 0.6, 8], ["drop", 934, 792, 0.55, 20], ["drop", 1064, 790, 0.62, -6], ["drop", 1128, 802, 0.5, -6], ["plus", 1036, 1218, 1, 12], ["pin", 1046, 22, 1, 14]],
    lines: [
      "M183 130Q180 115 195 110L305 80Q318 78 322 92L332 130M183 130L200 195Q205 210 218 208L235 205L245 225L265 200L298 188L300 178M230 128L285 112Q292 115 288 122L235 138Q225 138 230 128ZM240 152L290 138Q298 140 292 148L245 163Q232 162 240 152ZM332 140L340 160L308 172Q302 180 312 182L345 175L335 188L368 160L340 145",
      "M45 262Q45 250 60 250L85 248Q98 250 97 265Q95 275 80 275L85 342M42 265L50 345M48 295H78M50 318H80M65 250L72 275M15 365C20 345 60 340 120 340Q130 345 135 385M15 365L22 405M0 420C60 385 140 380 200 400C255 425 255 495 205 530C150 562 60 568 0 560" + ring(62, 108, 473) + ring(32, 107, 473) + ring(3, 101, 428) + ring(3, 132, 436) + ring(3, 149, 457) + ring(3, 152, 490) + ring(3, 122, 515) + ring(3, 90, 511) + ring(3, 66, 486) + ring(3, 71, 452),
      "M205 340C210 310 240 290 270 278L275 258L288 275Q320 270 348 278Q370 270 370 250L380 248L378 290L395 300Q380 308 350 305C320 345 290 360 240 355Q205 350 205 340ZM242 300C265 310 270 335 268 355M278 318Q290 300 318 308L310 318Q295 308 278 318" + ring(4, 238, 322),
      "M335 0C330 90 370 130 425 138C400 150 370 190 395 235C420 255 470 240 495 248C510 260 500 275 450 292Q440 300 455 302C500 300 560 280 540 225C525 195 490 200 482 188Q485 175 510 185C540 210 590 180 605 185C660 190 705 200 695 240C690 265 650 280 625 292Q620 302 650 300C700 295 740 260 740 220C738 160 660 130 662 60L672 50M595 15C550 40 530 160 605 185M425 138C460 145 520 140 552 132M400 10C410 60 480 90 545 0M752 0C750 50 790 80 820 85Q870 75 858 60C800 75 810 20 808 0M765 65C745 110 755 150 765 170C800 210 850 190 900 140Q908 140 900 155C870 220 820 255 742 243M765 90C840 120 920 110 950 85C975 60 985 30 982 0M342 35C370 38 378 60 350 72M380 105C395 90 420 105 422 132M460 138C465 110 505 108 512 138M658 90C635 95 635 135 662 135M695 168C690 190 715 205 730 195M510 185C520 155 550 165 555 190M505 210C508 230 535 240 540 230M515 290C505 270 520 255 535 262M765 168C760 195 780 200 795 195M820 195C830 205 850 200 850 180M862 105C865 70 905 65 910 100M965 45C940 40 930 60 935 85M805 15C785 15 785 45 805 42M700 272C695 255 710 245 730 250",
      "M945 130Q942 115 958 112L1136 78M945 130L965 220Q970 235 985 233L1136 205M988 142Q995 130 1010 135L1020 175Q1010 190 998 185ZM985 170Q1000 200 1030 180M1013 190V205M1060 138L1095 158L1065 172ZM1120 138H1136",
      "M435 475L450 510L485 505Q488 510 465 528L482 552Q480 560 470 558L445 545L432 575Q425 572 422 540L392 538Q390 532 425 512ZM405 755L408 790L450 815Q455 830 445 828L405 825L415 870Q412 880 405 875L385 835L350 865Q343 862 350 855L372 825L332 805Q330 795 340 798L385 802Z",
      "M188 590Q190 575 205 576L300 585Q312 588 310 600L338 608L330 655L308 650Q305 668 290 667L195 655Q182 655 184 640Z" + ring(8, 217, 604),
      "M508 598C560 590 600 620 602 665C590 720 540 755 480 758C430 755 410 730 418 690C430 640 470 605 508 598ZM510 632C560 630 580 650 560 675C540 710 500 715 475 705C450 690 465 640 510 632ZM498 600L503 632M550 605L540 632M590 635L562 650M600 685L562 682M560 735L530 705M492 755L495 708M425 722L465 700M430 650L468 668M500 600C495 575 510 560 520 570C525 580 520 595 520 598M580 605C600 570 640 565 640 590C635 615 610 628 600 632M600 682C630 685 635 700 620 708Q600 705 590 700M490 760C485 790 500 800 510 795C520 785 515 765 515 755M425 650C385 635 380 660 392 670Q410 672 420 670",
      "M690 600C670 590 645 610 648 650C655 690 690 705 720 702C760 690 775 650 770 610C760 575 720 565 692 580M692 602C680 560 685 545 690 540C660 520 650 490 653 465C665 450 680 470 695 475C700 460 725 450 732 452C745 490 730 520 715 530M690 540C680 500 690 485 698 478M690 540C710 530 740 520 730 495Q750 490 770 495C770 530 740 545 690 540M692 600L715 645M680 540C675 560 676 590 685 605",
      "M92 740C90 705 125 690 145 700C170 720 170 760 140 778C110 775 95 755 92 740ZM80 885C75 850 90 810 120 792L148 808L165 782C200 780 240 820 245 850Q245 858 235 860L90 893Q80 893 80 885Z" + ring(86, 242, 986) + "M218 1018L278 1007C275 1045 230 1045 218 1018Z",
      "M620 780Q615 765 635 757L840 703Q855 700 862 715L905 880Q905 890 895 895L875 900L880 942L815 912L690 947Q670 950 664 935ZM852 872L838 885L825 880M852 880L870 848" + ring(65, 737, 828) + ring(18, 755, 810) + ring(6, 755, 812) + "M693 828C700 815 720 820 728 830M705 860L778 840C775 890 725 900 705 860ZM730 855L735 880Q745 890 758 875L752 845",
      "M920 520Q935 510 970 512C1020 520 1060 560 1070 670Q1065 690 1045 695L925 726Q908 728 905 715L890 605Q888 585 895 580C910 585 920 570 912 560C930 555 930 545 932 540Q925 530 920 520ZM975 512C1020 540 1045 620 1045 695M1000 520C1040 550 1060 640 1062 680M925 605L945 612L930 625M995 592L978 605L998 608M948 655C960 665 980 660 990 652M958 660Q955 680 972 682Q990 680 988 655M970 722L980 765Q985 775 995 773Q1008 772 1008 760L998 710",
      "M1136 620C1110 615 1105 640 1115 665C1120 690 1085 710 1100 735Q1120 755 1136 748",
      "M985 890Q990 875 1030 890C1060 870 1110 865 1136 870M985 890C985 915 990 930 1002 935C1000 990 1030 1015 1070 1018Q1110 1020 1136 1008M1068 1020C1070 1050 1110 1060 1108 1085C1085 1095 1085 1120 1105 1122L1136 1125M1130 1120Q1110 1100 1136 1090M1085 930L1095 945L1080 955L1068 950M1095 945L1110 955" + ring(16, 1050, 926) + ring(16, 1122, 908) + ring(6, 1054, 922) + ring(3, 1028, 962) + ring(3, 1040, 962),
      "M385 930Q385 908 410 908L585 906Q610 908 611 930V1060Q610 1085 590 1087L480 1090L430 1132Q425 1132 425 1088L405 1087Q385 1085 385 1060Z",
      "M425 955H445V990H460V955H473V1032H460V1005H445V1034H425ZM497 985H515V1032H497Z" + ring(9, 505, 968),
      "M763 1105C760 1080 765 1045 775 1038C795 1040 800 1060 802 1080C805 1105 825 1125 835 1122C865 1110 865 1085 845 1060C830 1040 790 1035 795 1022Q810 1005 850 1020C880 1040 900 1070 907 1100M897 1060C900 1000 905 965 922 968C945 980 945 1020 925 1095M938 1040C950 1010 965 990 978 992C990 1005 980 1050 935 1112M960 1080C990 1050 1010 1040 1012 1055C1000 1090 940 1110 875 1208M763 1105C780 1150 790 1170 793 1197M775 1215Q775 1198 790 1198L878 1208Q890 1210 889 1225L885 1250Q883 1262 870 1262L785 1252Q768 1250 770 1235Z",
      "M590 1195C560 1160 540 1140 545 1125C560 1105 580 1110 587 1118C600 1105 630 1105 632 1130C630 1155 600 1165 590 1195ZM585 1200C570 1225 535 1235 527 1215C515 1205 518 1190 530 1185C515 1165 530 1150 545 1158C570 1165 580 1190 585 1200ZM592 1198C605 1175 630 1160 650 1158C670 1155 680 1175 668 1188C680 1195 675 1220 655 1225C630 1225 605 1215 592 1198ZM590 1205C600 1220 640 1235 640 1255Q635 1265 620 1262Q612 1278 598 1275Q588 1260 590 1205ZM585 1208L520 1260Q515 1270 525 1273L590 1215",
      "M173 1160Q170 1150 185 1148L225 1142V1125Q230 1115 245 1120L250 1138L300 1130Q312 1132 310 1143Q308 1150 300 1152L275 1155L262 1210L290 1240Q298 1255 290 1262L272 1258L248 1240L220 1280Q205 1290 208 1270L240 1225L218 1205Q212 1195 222 1192Q232 1190 245 1210L255 1160L190 1172Q175 1175 173 1160Z",
      "M325 1200Q335 1188 350 1192L368 1195L410 1290Q412 1302 400 1303L385 1302L375 1278L332 1290L325 1315Q305 1325 298 1312ZM345 1228L362 1262L337 1265Z",
      "M0 1060L20 1052L85 1210Q88 1220 75 1225L0 1265",
      "M22 1330C25 1290 50 1265 95 1265C135 1268 145 1290 155 1320C180 1340 185 1365 175 1395Q170 1408 155 1400L145 1380L50 1395L45 1405Q40 1418 25 1415L5 1380C0 1360 10 1340 22 1330ZM40 1330C45 1270 125 1265 135 1322ZM28 1335L20 1330M150 1320L160 1322" + ring(12, 37, 1360) + ring(12, 146, 1349),
      ring(71, 121, 1504) + "M97 1472L155 1500L112 1540Z" + ring(108, 344, 1525) + "M338 1500L325 1450Q325 1440 345 1440Q365 1440 363 1450L348 1500ZM330 1505L300 1458Q280 1455 275 1480ZM358 1505L390 1458Q410 1460 415 1480ZM328 1515L265 1508Q255 1515 258 1540L328 1530ZM360 1515L425 1508Q435 1520 430 1540L360 1530ZM335 1535L290 1565M355 1535L400 1565",
      "M483 1328L520 1348Q522 1355 512 1355L482 1335ZM465 1368L505 1372Q512 1378 505 1382L468 1378ZM465 1400L505 1392Q515 1398 505 1404L468 1410Z",
      "M535 1405Q532 1385 555 1378L770 1318Q800 1312 810 1335L822 1385Q825 1410 800 1418L590 1495Q560 1500 550 1480ZM735 1325L738 1312L755 1310L760 1322M595 1497L600 1510L790 1458Q800 1450 795 1440",
      "M893 1340C885 1320 900 1300 925 1270C950 1230 970 1170 1000 1155C1040 1140 1060 1150 1080 1175L1136 1198M893 1340C910 1370 940 1380 980 1370C1010 1340 1060 1325 1100 1360Q1130 1390 1136 1430M1095 1275L1115 1228L1128 1235L1108 1278ZM1136 1310Q1105 1320 1115 1340L1136 1352M985 1400C995 1360 1050 1360 1068 1385C1050 1390 1040 1400 1070 1405C1080 1420 1060 1430 1045 1430Q1020 1410 1012 1445C995 1440 980 1420 985 1400",
      "M940 1448C950 1430 1050 1475 1055 1498C1050 1515 945 1470 940 1448ZM960 1452C980 1455 1030 1480 1035 1490M940 1450L905 1565M1055 1500L1045 1525M720 1565C750 1530 800 1515 850 1565M825 1520C820 1490 850 1480 858 1505L860 1565M510 1565L520 1545L540 1565" + ring(20, 1040, 1548) + ring(10, 1040, 1548) + "M0 1525Q25 1540 30 1565",
    ],
  },
];

/* seven-segment strokes for the clock doodle */
const SEGS: Record<string, string> = {
  a: "M6 0H34", b: "M40 6V30", c: "M40 42V66", d: "M6 72H34", e: "M0 42V66", f: "M0 6V30", g: "M6 36H34",
};
const DIGITS: [number, string][] = [[0, "abcdef"], [62, "abcdfg"], [150, "abdeg"], [212, "abcdefg"]];

function Wallpaper() {
  return (
    <svg
      aria-hidden="true"
      className="absolute inset-0 size-full"
      viewBox="629 342 751 1307"
      preserveAspectRatio="xMidYMin slice"
      fill="none"
      stroke="#18252b"
      strokeLinejoin="round"
      strokeLinecap="round"
    >
      {TILES.map((t) => (
        <g
          key={`${t.x}-${t.y}`}
          transform={`translate(${t.x} ${t.y}) scale(0.3333 ${t.scaleY ?? 0.3333})`}
          strokeWidth="5.500"
        >
          {t.dots.map(([x, y, r], i) => (
            <circle key={i} cx={x} cy={y} r={r} />
          ))}
          <path d={t.lines.join("")} />
          {t.marks.map(([kind, x, y, s, rot], i) => (
            <path
              key={i}
              d={SHAPES[kind]}
              strokeWidth={5.5 / s}
              transform={`translate(${x} ${y}) rotate(${rot ?? 0}) scale(${s})`}
            />
          ))}
        </g>
      ))}
      <g transform="translate(1188 1594) rotate(-14) scale(0.3)" strokeWidth="6">
        {DIGITS.map(([x, segs]) => (
          <path key={x} transform={`translate(${x} 0)`} d={segs.split("").map((s) => SEGS[s]).join("")} />
        ))}
        <path d="M126 24v2M126 48v2" />
      </g>
    </svg>
  );
}

/* ---------- emoji drawings ---------- */

function RedHeart({ id, className }: { id: string; className: string }) {
  return (
    <svg viewBox="0 0 40 40" className={className} role="img" aria-label="red heart">
      <defs>
        <radialGradient id={id} cx="0.5" cy="0.35" r="0.65">
          <stop offset="0" stopColor="#ff4438" />
          <stop offset="0.65" stopColor="#fa2f26" />
          <stop offset="1" stopColor="#c81410" />
        </radialGradient>
        <linearGradient id={`${id}-shine`} x1="0" y1="0" x2="0" y2="1">
          <stop offset="0" stopColor="#ffc9c0" stopOpacity="0.85" />
          <stop offset="1" stopColor="#ff6a60" stopOpacity="0" />
        </linearGradient>
      </defs>
      <path
        d="M20 39.5C13 32 .5 24 .5 12C.5 5 5 .8 10.5.8C15 .8 18.500 3.500 20 7.500C21.500 3.500 25 .8 29.500.8C35 .8 39.500 5 39.500 12C39.500 24 27 32 20 39.500Z"
        fill={`url(#${id})`}
      />
      <path d="M2.500 11C3.500 5 8 2 11 2C15 2 17 5 18.500 10C13 6.500 7 7 2.500 11ZM37.500 11C36.500 5 32 2 29 2C25 2 23 5 21.500 10C27 6.500 33 7 37.500 11Z" fill={`url(#${id}-shine)`} />
    </svg>
  );
}

function HeartHands() {
  return (
    <svg viewBox="1188 426 106 72" className="h-6 w-9" role="img" aria-label="heart hands">
      <defs>
        <linearGradient id="hands" x1="0" y1="0" x2="0" y2="1">
          <stop offset="0" stopColor="#ffd84a" />
          <stop offset="1" stopColor="#e9a318" />
        </linearGradient>
      </defs>
      <g fill="url(#hands)" stroke="#c98512" strokeWidth="1.500" strokeLinejoin="round">
        <path d="M1189 484C1196 472 1197 455 1205 442C1209 432 1216 428 1225 430C1232 430 1238 434 1240 440C1232 435 1220 438 1217 447C1215 460 1228 472 1240 483C1240 490 1232 490 1226 487C1216 484 1210 486 1206 494Z" />
        <path d="M1292 484C1285 472 1284 455 1276 442C1272 432 1265 428 1256 430C1249 430 1243 434 1241 440C1249 435 1261 438 1264 447C1266 460 1253 472 1241 483C1241 490 1249 490 1255 487C1265 484 1271 486 1275 494Z" />
      </g>
      <path d="M1208 448C1212 440 1218 436 1226 435M1208 462C1212 470 1220 478 1230 484M1273 448C1269 440 1263 436 1255 435M1273 462C1269 470 1261 478 1251 484" fill="none" stroke="#c98a14" strokeWidth="2" />
    </svg>
  );
}

function PalestineFlag() {
  return (
    <svg viewBox="154 736 142 104" className="h-[35px] w-[47px]" role="img" aria-label="flag of Palestine">
      <defs>
        <clipPath id="flag-shape">
          <path d="M156 746C195 762 230 740 260 740Q280 738 292 744V828C255 820 220 838 190 837Q170 836 156 830Z" />
        </clipPath>
        <linearGradient id="flag-fold" x1="0" x2="1">
          <stop offset="0" stopColor="#000" stopOpacity="0.15" />
          <stop offset="0.35" stopColor="#fff" stopOpacity="0.15" />
          <stop offset="0.65" stopColor="#000" stopOpacity="0.12" />
          <stop offset="1" stopColor="#fff" stopOpacity="0.15" />
        </linearGradient>
      </defs>
      <g clipPath="url(#flag-shape)">
        <rect x="150" y="730" width="150" height="115" fill="#f2f2f2" />
        <path d="M150 730H300V771C255 762 220 785 185 784Q165 782 150 776Z" fill="#101010" />
        <path d="M150 806C185 818 225 802 255 798Q280 794 300 799V850H150Z" fill="#3c7c48" />
        <path d="M155 744L194 794L155 832Z" fill="#c4303a" />
        <rect x="150" y="730" width="150" height="115" fill="url(#flag-fold)" />
      </g>
    </svg>
  );
}

function PinchedFingers() {
  return (
    <svg viewBox="440 710 148 152" className="h-12 w-[47px]" role="img" aria-label="pinched fingers">
      <defs>
        <linearGradient id="pinch" x1="0" y1="0" x2="0.3" y2="1">
          <stop offset="0" stopColor="#fdc93c" />
          <stop offset="0.55" stopColor="#ffd75a" />
          <stop offset="1" stopColor="#eeab2c" />
        </linearGradient>
      </defs>
      <path
        fillRule="evenodd"
        fill="url(#pinch)"
        d="M443 812C460 815 478 812 490 806C498 790 504 775 514 764C522 750 518 738 526 724C530 714 540 711 548 715C556 718 560 726 567 734C580 748 585 770 583 796C580 822 560 840 540 850C510 862 475 859 447 858Q443 858 443 852ZM540 746C544 756 540 768 538 780C546 783 553 778 556 770C556 758 550 750 540 746Z"
      />
      <path d="M490 806Q496 828 478 830M526 724C524 734 528 744 534 748C530 758 528 768 532 778C536 788 552 786 558 776M548 716C556 726 560 740 567 752" fill="none" stroke="#d18a1c" strokeWidth="2.500" strokeLinecap="round" />
      <path d="M443 850C475 858 520 854 545 840C565 829 578 812 582 794C584 830 550 860 500 860L447 859Q443 858 443 850Z" fill="#d98b16" opacity="0.45" />
    </svg>
  );
}

/* ---------- page ---------- */

const iconButton = "flex shrink-0 items-center justify-center text-[#0f5fd6]";

function StatusIcons() {
  return (
    <div className="flex items-end text-[#4a4a4a]" role="img" aria-label="Battery, signal, Wi-Fi and vibrate">
      <svg viewBox="320 237 48 70" className="h-6 w-4" fill="currentColor">
        <path d="M333 238h20v9h13v24h-45v-24h12Z" fill="#bdbdbd" />
        <path d="M321 270h45v31q0 5-5 5h-35q-5 0-5-5Z" />
      </svg>
      <svg viewBox="392 237 60 70" className="ml-2 h-6 w-5" fill="currentColor">
        <rect x="393" y="243" width="7" height="63" rx="3" />
        <rect x="410" y="258" width="7" height="48" rx="3" />
        <rect x="427" y="274" width="7" height="32" rx="3" />
        <rect x="443" y="291" width="7" height="15" rx="3" />
      </svg>
      <svg viewBox="468 237 90 70" className="ml-1 h-6 w-[30px]" fill="none" stroke="currentColor" strokeWidth="7" strokeLinecap="round">
        <path d="M473 256C491 238 521 238 539 256M481 266C495 252 518 252 532 265M490 276C499 268 511 267 520 274" />
        <circle cx="505" cy="289" r="5" fill="currentColor" stroke="none" />
        <g strokeWidth="5">
          <path d="M526 283v18M519 295l7 7 7-7M546 297v-18M539 286l7-7 7 7" />
        </g>
      </svg>
      <svg viewBox="573 237 69 70" className="ml-1.5 h-6 w-[23px]" fill="currentColor">
        <path d="M575 263q0-3 4-3h10l26 27v18h-3l-22-21h-11q-4 0-4-4Z" />
        <path d="M602 254l10-12h3v26Z" />
        <path d="M578 243L620 288" stroke="currentColor" strokeWidth="6" fill="none" />
        <path d="M637 241q-8 5-8 10q8 5 7 10q-8 5-8 10q8 5 8 10q-8 5-8 10q8 5 8 12" stroke="currentColor" strokeWidth="7" fill="none" strokeLinecap="round" />
      </svg>
    </div>
  );
}

export default function App() {
  return (
    <div className="flex min-h-screen flex-col bg-black pt-[137px] pb-[141px] pl-3 font-[Roboto,sans-serif]">
      <div className="relative mx-auto flex w-full max-w-[840px] grow flex-col rounded-[134px] bg-white p-2.5">
        <span className="absolute top-[275px] -left-[7px] h-[65px] w-2 rounded-l-xs bg-white" />
        <span className="absolute top-[398px] -left-[7px] h-[129px] w-2 rounded-l-xs bg-white" />
        <span className="absolute top-[562px] -left-[7px] h-[129px] w-2 rounded-l-xs bg-white" />
        <span className="absolute top-[441px] -right-[9px] h-[205px] w-2.5 rounded-r-xs bg-white" />

        <main className="flex grow flex-col rounded-[124px] border-[5px] border-[#e4e8ef] pr-[31px] pl-7">
          <div className="grid h-[87px] grid-cols-[1fr_auto_1fr] items-center pt-[30px]">
            <div className="pl-12">
              <StatusIcons />
            </div>
            <div className="relative mt-3 ml-0.5 self-start">
              <div className="h-4 w-[95px] rounded-full bg-[#e4e8ef]" />
              <div className="absolute top-0 left-full ml-7 size-4 rounded-full bg-[#e4e8ef]" />
            </div>
            <div className="flex items-center justify-end gap-3 pr-12 text-[#4a4a4a]">
              <svg viewBox="794 239 68 65" className="h-[22px] w-[22px]" fill="none" stroke="currentColor" strokeWidth="5" aria-hidden="true">
                <rect x="797.500" y="242.500" width="61" height="58" rx="4" />
                <circle cx="815" cy="261" r="6.500" fill="currentColor" stroke="none" />
                <path d="M798 290l17-18q3-2 6 1l9 8 13-14q3-2 6 1l9 10v22h-60Z" fill="currentColor" stroke="none" />
              </svg>
              <time dir="ltr" className="font-['DejaVu_Sans_Condensed','DejaVu_Sans',sans-serif] text-xl leading-6">٧:١٠</time>
            </div>
          </div>

          <header className="grid h-[103px] grid-cols-[1fr_auto_1fr] items-center border-b border-[#b4babd]">
            <div className="flex items-center gap-10 pl-[21px]">
              <button type="button" aria-label="Back" className={iconButton}>
                <svg viewBox="243 454 64 110" className="h-9 w-[22px]" fill="none" stroke="currentColor" strokeWidth="13" strokeLinecap="round" strokeLinejoin="round">
                  <path d="M298 462L251 508.500L298 555" />
                </svg>
              </button>
              <div className="flex size-[62px] items-center justify-center rounded-full bg-linear-to-b from-[#747474] to-[#505050]">
                <svg viewBox="458 462 124 92" className="h-[31px] w-[42px]" fill="#dedede" aria-hidden="true">
                  <circle cx="548" cy="491" r="16.500" />
                  <path d="M530 519C555 505 579 522 579 541Q579 546 573 546H552Q550 530 530 519Z" />
                  <circle cx="502" cy="486" r="21" />
                  <path d="M461 545C463 505 540 505 544 545Q544 552 537 552H467Q461 552 461 545Z" />
                </svg>
              </div>
            </div>
            <button type="button" className="flex flex-col items-center">
              <span className="flex h-9 items-center gap-1">
                <HeartHands />
                <RedHeart id="heart-title" className="size-9" />
              </span>
              <span className="text-[23px] leading-8 font-semibold text-[#0f5fd6]">tap here for group info</span>
            </button>
            <div className="flex items-center justify-end gap-9 pr-[21px]">
              <button type="button" aria-label="Video call" disabled className={iconButton}>
                <svg viewBox="724 468 130 88" className="h-[30px] w-11" fill="none" stroke="#a9c6f3" strokeWidth="8" strokeLinejoin="round">
                  <rect x="728" y="473" width="89" height="79" rx="14" />
                  <path d="M817 504L843 482Q848 480 848 484V542Q848 547 843 545L817 522" />
                </svg>
              </button>
              <button type="button" aria-label="Voice call" className={iconButton}>
                <svg viewBox="964 454 116 116" className="size-[38px]" fill="none" stroke="currentColor" strokeWidth="8" strokeLinejoin="round">
                  <path d="M988 459C978 459 969 470 969 487C969 522 1002 563 1048 563C1062 563 1074 553 1074 545C1074 537 1062 528 1050 524C1041 521 1036 533 1028 533C1018 532 998 512 998 503C998 496 1011 493 1010 485C1008 475 1000 460 988 459Z" />
                </svg>
              </button>
            </div>
          </header>

          <section className="relative isolate flex grow flex-col items-center overflow-hidden bg-[#071318] pt-2" aria-label="Conversation">
            <Wallpaper />
            <p className="relative rounded-[14px] bg-[#1d282d] px-4 pt-[7px] pb-[9px] text-[25px] leading-[34px] text-[#0b0f10]">Today</p>
            <p className="relative mx-[41px] mt-[15px] self-stretch rounded-[14px] bg-[#1d282d] px-3 pt-[7px] pb-[7px] text-center text-[25px] leading-[36px] text-[#0b0f10]">
              <svg viewBox="284 298 48 63" className="mr-3 inline-block h-[21px] w-4 align-[-1px]" aria-hidden="true">
                <path d="M293 328V318C293 298 322 298 322 318V328" fill="none" stroke="#e3cf9f" strokeWidth="7" />
                <rect x="285" y="323" width="46" height="38" rx="7" fill="#fdd17c" />
              </svg>
              Messages and calls are end-to-end encrypted. No
              <br />
              one outside of this chat, not even WhatsApp, can read or
              <br />
              listen to them. Tap to learn more.
            </p>
            <div className="relative mt-[17px] mr-[30px] flex h-20 items-center self-end rounded-xl bg-[#d9f7c7] pr-[18px] pl-5">
              <svg viewBox="0 0 20 28" className="absolute right-[-16px] bottom-[3px] h-7 w-5" fill="#d9f7c7" aria-hidden="true">
                <path d="M0 0H4C5 6 12 12 20 16C14 18 8 18 4 20L0 24Z" />
              </svg>
              <span className="flex items-center gap-1 pb-1">
                <PalestineFlag />
                <RedHeart id="heart-message" className="mx-px size-10" />
                <PinchedFingers />
              </span>
              <span className="ml-[18px] flex items-center gap-[9px] self-end pb-1">
                <time className="font-['Noto_Sans',sans-serif] text-2xl leading-8 text-[#4d524a]">7:10 PM</time>
                <svg viewBox="937 828 58 52" className="h-[18px] w-5" fill="#c9c9c9" role="img" aria-label="Sent">
                  <path d="M938 855L946 850L960 863L990 829L995 832L962 880Z" />
                </svg>
              </span>
            </div>
          </section>

          <form className="flex h-[78px] items-center bg-[#fafafa] pr-[38px] pl-8" onSubmit={(e) => e.preventDefault()}>
            <button type="button" aria-label="Attach" className={iconButton}>
              <svg viewBox="121 120 110 110" className="size-9" fill="none" stroke="currentColor" strokeWidth="10" strokeLinecap="round">
                <path d="M128 175H224M176 127V223" />
              </svg>
            </button>
            <label className="relative ml-6 flex h-[62px] min-w-0 grow items-center rounded-full border border-[#b8b8b8] pr-3.5 pl-[26px]">
              <span className="absolute top-2 left-[26px] h-11 w-[3px] bg-[#3b9cec]" />
              <input
                type="text"
                aria-label="Message"
                placeholder="Message"
                className="min-w-0 grow bg-transparent pb-px text-4xl text-[#333] outline-none placeholder:text-[#8a979f]"
              />
              <button type="button" aria-label="Stickers" className={iconButton}>
                <svg viewBox="387 127 104 104" className="size-9" fill="none" stroke="currentColor" strokeWidth="8" strokeLinejoin="round">
                  <path d="M426 133H453C473 133 485 145 485 165V177C485 190 482 195 475 203L462 215C455 222 450 223 440 223H426C404 223 394 212 394 190V165C394 144 405 133 426 133Z" />
                  <path d="M442 222V205C442 188 448 181 465 181H484" />
                </svg>
              </button>
            </label>
            <button type="button" aria-label="Camera" className={`${iconButton} ml-7`}>
              <svg viewBox="621 117 136 118" className="h-10 w-[46px]" fill="none" stroke="currentColor" strokeWidth="8" strokeLinejoin="round">
                <path d="M650 136C658 136 664 134 668 129Q674 124 680 124H698Q704 124 710 129C714 134 720 136 728 136Q749 136 749 157V206Q749 227 728 227H650Q628 227 628 206V157Q628 136 650 136Z" />
                <circle cx="689" cy="178" r="26" />
              </svg>
            </button>
            <button type="button" aria-label="Voice message" className={`${iconButton} ml-10`}>
              <svg viewBox="879 110 86 124" className="h-[42px] w-[30px]" fill="none" stroke="currentColor" strokeWidth="7.500" strokeLinecap="round">
                <rect x="902" y="114" width="40" height="81" rx="20" />
                <path d="M885 175C886 222 958 222 960 175M922 212V230" />
              </svg>
            </button>
          </form>

          <nav className="flex h-[117px] justify-center gap-[120px] pt-[27px] text-[#949494]" aria-label="System navigation">
            <button type="button" aria-label="Recent apps" className="flex h-9 w-[90px] items-center justify-center">
              <svg viewBox="0 0 28 28" className="size-7" stroke="currentColor" strokeWidth="4" strokeLinecap="round">
                <path d="M3 2.500v23M14 2.500v23M25 2.500v23" />
              </svg>
            </button>
            <button type="button" aria-label="Home" className="flex h-9 w-[90px] items-center justify-center">
              <svg viewBox="0 0 30 30" className="size-[30px]" fill="none" stroke="currentColor" strokeWidth="3.500">
                <rect x="2" y="2" width="26" height="26" rx="8" />
              </svg>
            </button>
            <button type="button" aria-label="Back" className="flex h-9 w-[90px] items-center justify-center">
              <svg viewBox="0 0 18 30" className="h-[30px] w-[18px]" fill="none" stroke="currentColor" strokeWidth="3.500" strokeLinecap="round" strokeLinejoin="round">
                <path d="M3 3L15 15L3 27" />
              </svg>
            </button>
          </nav>
        </main>
      </div>
    </div>
  );
}
